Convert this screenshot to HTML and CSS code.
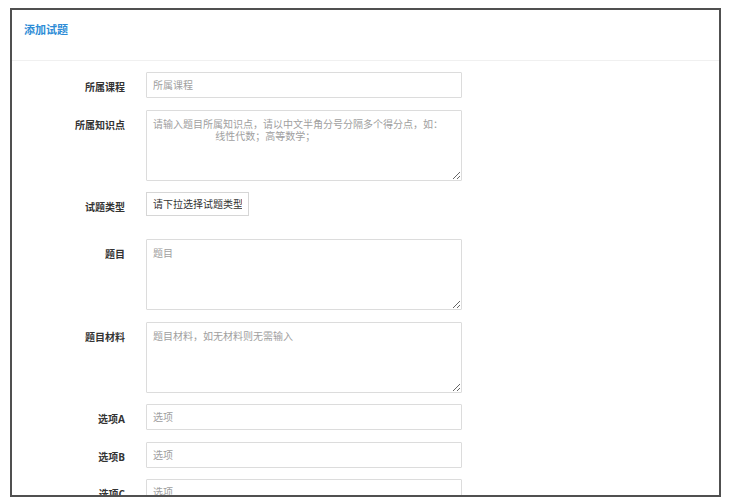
FILE: index.html
```html
<!DOCTYPE html>
<html lang="zh-CN">
<head>
<meta charset="utf-8">
<title>添加试题</title>
<link rel="stylesheet" href="styles.css">
</head>
<body>
<div class="frame">
  <div class="panel-head">添加试题</div>
  <form class="form">
    <div class="row">
      <label class="label">所属课程</label>
      <input class="field" type="text" placeholder="所属课程">
    </div>
    <div class="row">
      <label class="label">所属知识点</label>
      <textarea class="field area" placeholder="请输入题目所属知识点，请以中文半角分号分隔多个得分点，如：
                        线性代数；高等数学；"></textarea>
    </div>
    <div class="row row-select">
      <label class="label">试题类型</label>
      <select class="select"><option>请下拉选择试题类型</option></select>
    </div>
    <div class="row">
      <label class="label">题目</label>
      <textarea class="field area" placeholder="题目"></textarea>
    </div>
    <div class="row">
      <label class="label">题目材料</label>
      <textarea class="field area" placeholder="题目材料，如无材料则无需输入"></textarea>
    </div>
    <div class="row">
      <label class="label">选项A</label>
      <input class="field" type="text" placeholder="选项">
    </div>
    <div class="row">
      <label class="label">选项B</label>
      <input class="field" type="text" placeholder="选项">
    </div>
    <div class="row">
      <label class="label">选项C</label>
      <input class="field" type="text" placeholder="选项">
    </div>
  </form>
</div>
</body>
</html>
```
FILE: styles.css
```css
html, body {
  margin: 0;
  padding: 0;
  background: #fff;
}
body {
  font-family: "Open Sans", "Noto Sans CJK SC", sans-serif;
  font-size: 10px;
  color: #333;
}
.frame {
  box-sizing: border-box;
  margin: 8px 0 0 10px;
  width: 711px;
  height: 489px;
  border: 2px solid #505050;
  overflow: hidden;
  background: #fff;
}
.panel-head {
  box-sizing: border-box;
  height: 51px;
  padding: 12px 0 0 12px;
  line-height: 16px;
  font-size: 11px;
  font-weight: bold;
  color: #2d8cd6;
  border-bottom: 1px solid #f0f0f0;
}
.form {
  display: flex;
  flex-direction: column;
  gap: 11.5px;
  padding-top: 11px;
}
.row {
  display: flex;
  align-items: flex-start;
  gap: 21px;
}
.row-select {
  margin-bottom: 9.5px;
}
.label {
  width: 113px;
  flex: none;
  text-align: right;
  font-weight: bold;
  line-height: 22px;
  padding-top: 4px;
  color: #333;
}
.field {
  box-sizing: border-box;
  width: 316px;
  height: 26px;
  margin: 0;
  padding: 0 6px;
  border: 1px solid #dcdcdc;
  border-radius: 1px;
  font-family: "Open Sans", "Noto Sans CJK SC", sans-serif;
  font-size: 10px;
  color: #333;
  background: #fff;
  outline: none;
}
.field::placeholder {
  color: #a0a0a0;
}
.area {
  height: 71px;
  padding: 7px 6px;
  line-height: 12px;
  resize: vertical;
}
.select {
  box-sizing: border-box;
  width: 103px;
  height: 24px;
  margin: 0;
  padding: 0 6px;
  border: 1px solid #d6d6d6;
  border-radius: 0;
  background: #fff;
  appearance: none;
  -webkit-appearance: none;
  font-family: "Open Sans", "Noto Sans CJK SC", sans-serif;
  font-size: 10px;
  color: #333;
  outline: none;
}
```
